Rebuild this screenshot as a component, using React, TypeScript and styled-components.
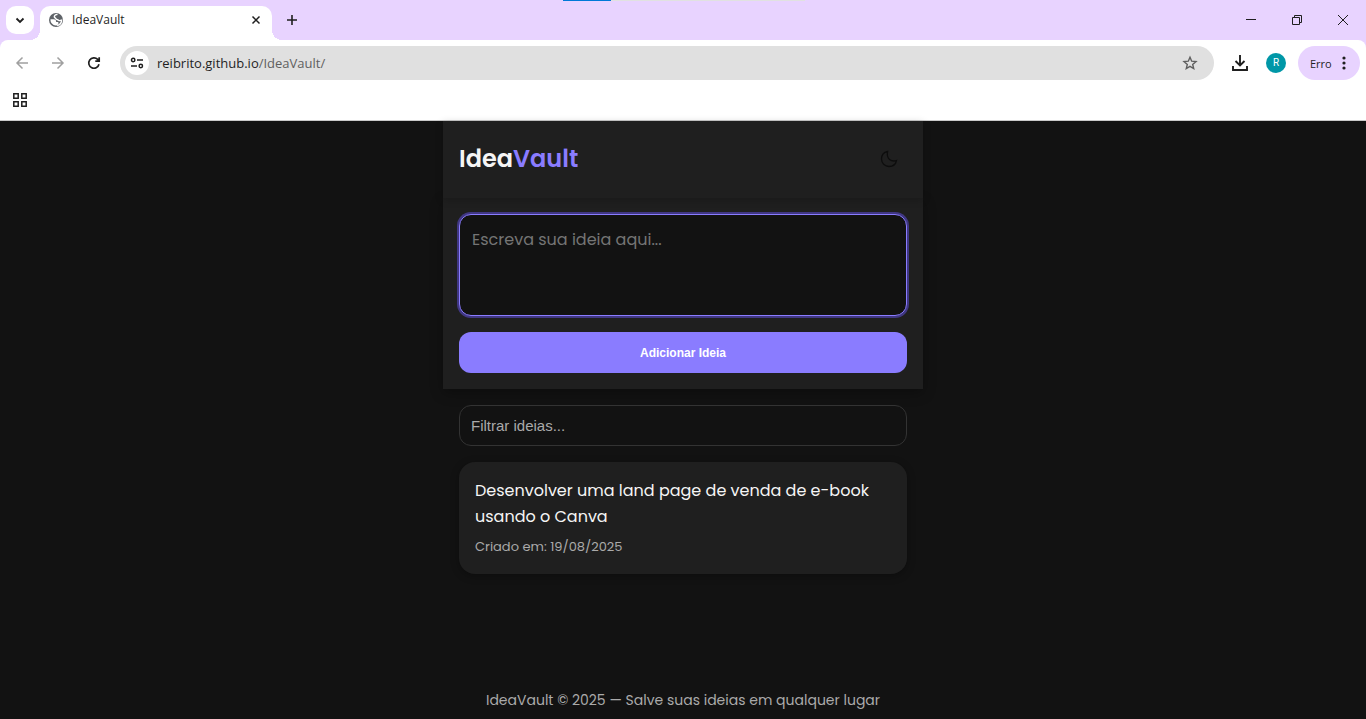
import React, { useState } from "react";
import styled, { createGlobalStyle } from "styled-components";

const GlobalStyle = createGlobalStyle`
  *, *::before, *::after { box-sizing: border-box; }
  html, body, #root { height: 100%; }
  body { margin: 0; background: #121212; }
  button, input, textarea { margin: 0; font: inherit; }
`;

const uiFont = `"Open Sans", "Noto Sans", sans-serif`;
const pageFont = `Poppins, Inter, "Open Sans", sans-serif`;
const formFont = `"Liberation Sans", Arial, sans-serif`;

const Window = styled.div`
  display: flex;
  flex-direction: column;
  min-height: 100%;
`;

const Browser = styled.header`
  flex: none;
  background: #e8d3ff;
  border-bottom: 1px solid #c9c9c9;
  font-family: ${uiFont};
  color: #1f1f1f;
`;

const TabStrip = styled.div`
  position: relative;
  display: flex;
  align-items: flex-start;
  height: 40px;
  padding: 6px 0 0 6px;
`;

const LoadingBar = styled.div`
  position: absolute;
  top: 0;
  left: 50%;
  width: 242px;
  height: 1px;
  margin-left: -120px;
  background: linear-gradient(to right, #0078d7 48px, #e1e1e1 48px);
`;

const IconButton = styled.button<{ $width?: number; $height?: number; $color?: string }>`
  display: flex;
  flex: none;
  align-items: center;
  justify-content: center;
  width: ${(p) => p.$width ?? 28}px;
  height: ${(p) => p.$height ?? 28}px;
  padding: 0;
  border: 0;
  border-radius: 10px;
  background: transparent;
  color: ${(p) => p.$color ?? "#1f1f1f"};
`;

const TabSearch = styled(IconButton)`
  background: #fff;
`;

const Tab = styled.div`
  position: relative;
  display: flex;
  align-items: center;
  width: 232px;
  height: 34px;
  margin: 0 6px;
  padding: 0 2px 6px 8px;
  border-radius: 10px 10px 0 0;
  background: #fff;
  font-size: 12px;
  line-height: 16px;

  &::before,
  &::after {
    content: "";
    position: absolute;
    bottom: 0;
    width: 10px;
    height: 10px;
  }
  &::before {
    right: 100%;
    background: radial-gradient(circle at 0 0, transparent 10px, #fff 10px);
  }
  &::after {
    left: 100%;
    background: radial-gradient(circle at 100% 0, transparent 10px, #fff 10px);
  }
`;

const TabTitle = styled.span`
  flex: 1;
  margin-left: 8px;
`;

const WindowControls = styled.div`
  display: flex;
  margin-left: auto;
`;

const Toolbar = styled.div`
  display: flex;
  align-items: center;
  height: 46px;
  padding: 0 6px 0 4px;
  border-radius: 8px 8px 0 0;
  background: #fff;
`;

const NavButtons = styled.div`
  display: flex;
  margin-right: 8px;
`;

const AddressBar = styled.div`
  display: flex;
  flex: 1;
  align-items: center;
  height: 34px;
  padding: 0 10px 0 5px;
  border-radius: 17px;
  background: #e0e0e0;
`;

const SiteInfo = styled(IconButton)`
  border-radius: 50%;
  background: #fff;
`;

const Address = styled.a`
  flex: 1;
  margin-left: 8px;
  color: #5f5f5f;
  font-size: 13px;
  line-height: 20px;
  text-decoration: none;
`;

const Host = styled.span`
  color: #1f1f1f;
`;

const Avatar = styled.button`
  width: 20px;
  height: 20px;
  margin-right: 12px;
  padding: 0;
  border: 0;
  border-radius: 50%;
  background: #0097a7;
  color: #fff;
  font-family: Roboto, sans-serif;
  font-size: 10px;
  line-height: 20px;
`;

const ErrorMenu = styled.button`
  display: flex;
  align-items: center;
  justify-content: space-between;
  width: 62px;
  height: 34px;
  padding: 0 8px 0 12px;
  border: 0;
  border-radius: 17px;
  background: #e8d3ff;
  color: #1f1f1f;
  font-size: 11px;
`;

const Bookmarks = styled.div`
  display: flex;
  align-items: center;
  height: 34px;
  padding: 0 6px 6px;
  background: #fff;
`;

const Page = styled.div`
  display: flex;
  flex: 1;
  flex-direction: column;
  width: 100%;
  max-width: 480px;
  margin: 0 auto;
  color: #f5f5f5;
  font-family: ${pageFont};
`;

const PageHeader = styled.header`
  position: relative;
  display: flex;
  align-items: center;
  justify-content: space-between;
  padding: 19px 16px 20px;
  background: #1f1f1f;
  box-shadow: 0 2px 8px rgba(0, 0, 0, 0.2);
`;

const Title = styled.h1`
  margin: 0;
  font-size: 24px;
  font-weight: 600;
  line-height: 38px;
`;

const Accent = styled.span`
  color: #8a7cff;
`;

const IdeaForm = styled.form`
  display: flex;
  flex-direction: column;
  gap: 16px;
  padding: 16px;
  background: #1f1f1f;
  box-shadow: 0 4px 12px rgba(0, 0, 0, 0.3);
`;

const IdeaText = styled.textarea`
  display: block;
  width: 100%;
  height: 102px;
  padding: 12px;
  border: 1px solid #8a7cff;
  border-radius: 12px;
  outline: none;
  background: #121212;
  box-shadow: 0 0 0 2px rgba(98, 80, 230, 0.5);
  color: #f5f5f5;
  font-size: 16px;
  line-height: 26px;
  resize: none;

  &::placeholder { color: #757575; }
`;

const AddButton = styled.button`
  height: 41px;
  border: 0;
  border-radius: 12px;
  background: #8a7cff;
  color: #fff;
  font-family: ${formFont};
  font-size: 12px;
  font-weight: 700;
`;

const Ideas = styled.main`
  display: flex;
  flex: 1;
  flex-direction: column;
  gap: 16px;
  padding: 16px;
`;

const Filter = styled.input`
  width: 100%;
  height: 41px;
  padding: 0 11px;
  border: 1px solid #333;
  border-radius: 12px;
  outline: none;
  background: #121212;
  color: #f5f5f5;
  font-family: ${formFont};
  font-size: 15px;

  &::placeholder { color: #aaa; }
`;

const IdeaCard = styled.article`
  padding: 16px;
  border-radius: 16px;
  background: #1f1f1f;
  box-shadow: 0 2px 8px rgba(0, 0, 0, 0.3);
`;

const IdeaBody = styled.p`
  margin: 0 0 6px;
  font-size: 16px;
  line-height: 26px;
`;

const IdeaDate = styled.small`
  display: block;
  color: #aaa;
  font-size: 13px;
  line-height: 22px;
`;

const Footer = styled.footer`
  padding: 8px 16px;
  color: #aaa;
  font-size: 14px;
  line-height: 22px;
  text-align: center;
`;

const Globe = () => (
  <svg width="16" height="16" viewBox="0 0 16 16" aria-hidden="true">
    <circle cx="8" cy="8" r="7" fill="#5f6368" />
    <path d="M9.500 2.400C7.800 2.600 6.300 3.500 6.300 4.800c0 1.200 1.400.9 1.500 1.900.1.800.9.900 1.800 1 .9.200 1 .9 1.900.9l2.100-.5C13.400 11 11.300 13.200 8.800 13.400" fill="none" stroke="#fff" strokeWidth="1.400" />
    <path d="M2.500 7.300h3.300c1.400 0 2.300.7 2.300 2v.8h1.600c.5 0 .8.400.8.900 0 1-.9 2.200-2.300 2.400C5 13.600 2.200 10.800 2.500 7.300Z" fill="#fff" />
  </svg>
);

const Stroke = ({ d, size = 16, width = 2 }: { d: string; size?: number; width?: number }) => (
  <svg width={size} height={size} viewBox={`0 0 ${size} ${size}`} fill="none" stroke="currentColor" strokeWidth={width} aria-hidden="true">
    <path d={d} />
  </svg>
);

export default function App() {
  const [idea, setIdea] = useState("");
  const [filter, setFilter] = useState("");

  return (
    <Window>
      <GlobalStyle />
      <Browser>
        <TabStrip>
          <LoadingBar />
          <TabSearch aria-label="Pesquisar guias">
            <Stroke d="M4.500 6.500 8 10l3.500-3.500" width={1.8} />
          </TabSearch>
          <Tab>
            <Globe />
            <TabTitle>IdeaVault</TabTitle>
            <IconButton aria-label="Fechar guia">
              <Stroke d="m4.500 4.500 7 7m0-7-7 7" width={1.5} />
            </IconButton>
          </Tab>
          <IconButton aria-label="Nova guia">
            <Stroke d="M8 3v10M3 8h10" width={1.6} />
          </IconButton>
          <WindowControls>
            <IconButton $width={46} aria-label="Minimizar">
              <Stroke d="M3 7.500h10" width={1} />
            </IconButton>
            <IconButton $width={46} aria-label="Restaurar">
              <Stroke d="M3.500 5.500h7v7h-7zM5.500 5V3.500h7v7H11" width={1} />
            </IconButton>
            <IconButton $width={46} aria-label="Fechar">
              <Stroke d="m3 3 10 10m0-10L3 13" width={1} />
            </IconButton>
          </WindowControls>
        </TabStrip>
        <Toolbar>
          <NavButtons>
            <IconButton $width={36} $color="#a0a0a0" aria-label="Voltar">
              <Stroke d="M14 8H3m5.500-5.500L3 8l5.500 5.500" width={1.5} />
            </IconButton>
            <IconButton $width={36} $color="#a0a0a0" aria-label="Avançar">
              <Stroke d="M2 8h11M7.500 2.500 13 8l-5.500 5.500" width={1.5} />
            </IconButton>
            <IconButton $width={36} aria-label="Recarregar">
              <Stroke d="M13 9.300A5.200 5.200 0 1 1 11.700 4.400l1.400 1.400M13.200 2.300v3.900H9.300" width={1.7} />
            </IconButton>
          </NavButtons>
          <AddressBar>
            <SiteInfo $width={24} $height={24} aria-label="Informações do site">
              <svg width="16" height="16" viewBox="0 0 16 16" fill="none" stroke="currentColor" strokeWidth="1.500" aria-hidden="true">
                <circle cx="4.200" cy="5" r="1.700" />
                <path d="M8 5h6M2 11h6" />
                <circle cx="11.800" cy="11" r="1.700" />
              </svg>
            </SiteInfo>
            <Address href="#"><Host>reibrito.github.io</Host>/IdeaVault/</Address>
            <IconButton $color="#5f5f5f" aria-label="Adicionar aos favoritos">
              <Stroke d="m8 2.200 1.700 4 4.300.4-3.300 2.800 1 4.200L8 11.400l-3.700 2.200 1-4.200L2 6.600l4.300-.4Z" width={1.4} />
            </IconButton>
          </AddressBar>
          <IconButton $width={52} aria-label="Downloads">
            <Stroke size={18} d="M9 1v10.500M4.500 7 9 11.500 13.500 7M2 12v4h14v-4" width={1.9} />
          </IconButton>
          <Avatar aria-label="Perfil R">R</Avatar>
          <ErrorMenu>
            Erro
            <svg width="16" height="16" viewBox="0 0 16 16" fill="currentColor" aria-hidden="true">
              <circle cx="8" cy="3" r="1.600" />
              <circle cx="8" cy="8" r="1.600" />
              <circle cx="8" cy="13" r="1.600" />
            </svg>
          </ErrorMenu>
        </Toolbar>
        <Bookmarks>
          <IconButton aria-label="Aplicativos">
            <Stroke d="M1.800 1.800h4.400v4.400H1.800zM9.800 1.800h4.400v4.400H9.800zM1.800 9.800h4.400v4.400H1.800zM9.800 9.800h4.400v4.400H9.800z" width={1.5} />
          </IconButton>
        </Bookmarks>
      </Browser>

      <Page>
        <PageHeader>
          <Title>Idea<Accent>Vault</Accent></Title>
          <IconButton $width={36} $height={36} $color="#0d0d0d" aria-label="Alternar tema">
            <Stroke size={18} d="M7.600 1.500C4.300 2.200 1.500 5 1.500 9a7.500 7.500 0 0 0 7.500 7.500c3.700 0 6.700-2.200 7.500-6C11.500 12.200 6 9 7.600 1.500Z" width={1.3} />
          </IconButton>
        </PageHeader>
        <IdeaForm onSubmit={(e) => e.preventDefault()}>
          <IdeaText aria-label="Ideia" placeholder="Escreva sua ideia aqui..." value={idea} onChange={(e) => setIdea(e.target.value)} />
          <AddButton type="submit">Adicionar Ideia</AddButton>
        </IdeaForm>
        <Ideas>
          <Filter type="text" aria-label="Filtrar ideias" placeholder="Filtrar ideias..." value={filter} onChange={(e) => setFilter(e.target.value)} />
          <IdeaCard>
            <IdeaBody>Desenvolver uma land page de venda de e-book usando o Canva</IdeaBody>
            <IdeaDate>Criado em: 19/08/2025</IdeaDate>
          </IdeaCard>
        </Ideas>
        <Footer>IdeaVault © 2025 — Salve suas ideias em qualquer lugar</Footer>
      </Page>
    </Window>
  );
}
